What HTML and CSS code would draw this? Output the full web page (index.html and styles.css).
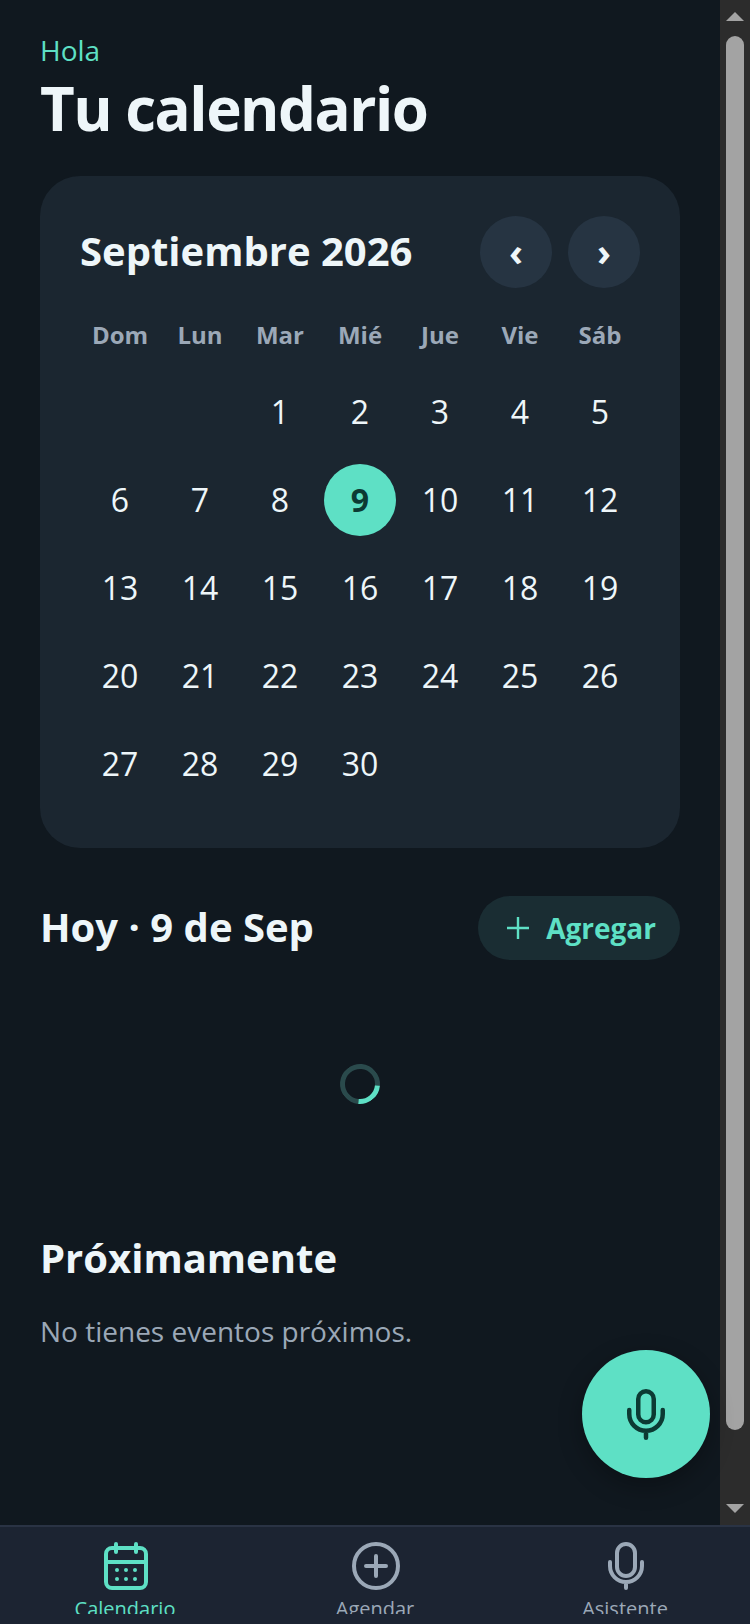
FILE: index.html
```html
<!DOCTYPE html>
<html lang="es">
 <head>
  <meta charset="UTF-8">
  <title>Tu calendario</title>
  <meta name="viewport" content="width=device-width, initial-scale=1.0">
  <link rel="stylesheet" href="styles.css">
 </head>
 <body>
  <div class="screen">
   <main class="content">
    <p class="hello">Hola</p>
    <h1 class="page-title">Tu calendario</h1>

    <section class="card">
     <div class="card-head">
      <h2 class="month">Septiembre 2026</h2>
      <div class="month-nav">
       <button class="round-btn">‹</button>
       <button class="round-btn">›</button>
      </div>
     </div>
     <div class="weekdays">
      <span>Dom</span><span>Lun</span><span>Mar</span><span>Mié</span><span>Jue</span><span>Vie</span><span>Sáb</span>
     </div>
     <div class="days">
      <span></span><span></span>
      <span>1</span><span>2</span><span>3</span><span>4</span><span>5</span>
      <span>6</span><span>7</span><span>8</span><span class="today">9</span><span>10</span><span>11</span><span>12</span>
      <span>13</span><span>14</span><span>15</span><span>16</span><span>17</span><span>18</span><span>19</span>
      <span>20</span><span>21</span><span>22</span><span>23</span><span>24</span><span>25</span><span>26</span>
      <span>27</span><span>28</span><span>29</span><span>30</span>
     </div>
    </section>

    <div class="today-head">
     <h2 class="section-title today-title">Hoy · 9 de Sep</h2>
     <button class="add-btn">
      <svg width="24" height="24" viewBox="0 0 24 24"><path d="M12 1 V23 M1 12 H23" fill="none" stroke="#5ee0c5" stroke-width="2.4"/></svg>
      Agregar
     </button>
    </div>

    <div class="loading"><div class="spinner"></div></div>

    <h2 class="section-title">Próximamente</h2>
    <p class="empty">No tienes eventos próximos.</p>

    <button class="fab">
     <svg width="38" height="51" viewBox="0 0 38 51"><g fill="none" stroke="#0c3a33" stroke-width="4.5" stroke-linecap="round"><rect x="11.25" y="2.25" width="15.5" height="31" rx="7.75"/><path d="M2.25 21 V25 A16.75 16.75 0 0 0 35.75 25 V21 M19 42 V48.75"/></g></svg>
    </button>
   </main>

   <div class="scrollbar">
    <div class="arrow-up"></div>
    <div class="thumb"></div>
    <div class="arrow-down"></div>
   </div>
  </div>

  <nav class="tabbar">
   <a class="tab active">
    <svg width="44" height="48" viewBox="0 0 44 48"><g fill="none" stroke="#5ee0c5" stroke-width="4" stroke-linecap="round"><rect x="2" y="6" width="40" height="40" rx="6"/><path d="M2 20 H42 M12 2 V10 M32 2 V10"/></g><g fill="#5ee0c5"><circle cx="13" cy="28" r="2"/><circle cx="22" cy="28" r="2"/><circle cx="31" cy="28" r="2"/><circle cx="13" cy="37" r="2"/><circle cx="22" cy="37" r="2"/><circle cx="31" cy="37" r="2"/></g></svg>
    <span>Calendario</span>
   </a>
   <a class="tab">
    <svg width="48" height="48" viewBox="0 0 48 48"><g fill="none" stroke="#9ba8b7" stroke-width="4" stroke-linecap="round"><circle cx="24" cy="24" r="22"/><path d="M24 14 V34 M14 24 H34"/></g></svg>
    <span>Agendar</span>
   </a>
   <a class="tab">
    <svg width="36" height="48" viewBox="0 0 36 48"><g fill="none" stroke="#9ba8b7" stroke-width="4" stroke-linecap="round"><rect x="9" y="2" width="18" height="32" rx="9"/><path d="M2 20 V24 A16 16 0 0 0 34 24 V20 M18 40 V46"/></g></svg>
    <span>Asistente</span>
   </a>
  </nav>
 </body>
</html>
```

FILE: styles.css
```css
* {
  box-sizing: border-box;
}
html, body {
  margin: 0;
  height: 100%;
}
body {
  font-family: "Open Sans", sans-serif;
  background: #10181f;
  color: #eef6f9;
  display: flex;
  flex-direction: column;
  height: 1624px;
  overflow: hidden;
}
.screen {
  display: flex;
  height: 1525px;
}
.content {
  position: relative;
  width: 720px;
  padding: 32px 40px 0;
}
.hello {
  margin: 0;
  font-size: 28px;
  line-height: 37px;
  color: #5ee0c5;
}
.page-title {
  margin: 0 0 29px;
  font-size: 60px;
  line-height: 78px;
  font-weight: 700;
  letter-spacing: -1.5px;
}
.card {
  background: #1b2630;
  border-radius: 40px;
  padding: 40px;
  height: 672px;
}
.card-head {
  display: flex;
  justify-content: space-between;
  align-items: center;
}
.month {
  margin: 0 0 4px;
  font-size: 40px;
  font-weight: 700;
}
.month-nav {
  display: flex;
  gap: 16px;
}
.round-btn {
  width: 72px;
  height: 72px;
  border: none;
  border-radius: 50%;
  background: #263442;
  color: #eef6f9;
  font-family: inherit;
  font-size: 38px;
  font-weight: 700;
  line-height: 70px;
  padding: 0 0 2px;
}
.weekdays, .days {
  display: grid;
  grid-template-columns: repeat(7, 80px);
  justify-items: center;
}
.weekdays {
  margin-top: 29px;
  height: 34px;
  align-items: center;
  font-size: 24px;
  font-weight: 700;
  color: #9ba8b7;
}
.days {
  margin-top: 25px;
  grid-auto-rows: 72px;
  row-gap: 16px;
  align-items: center;
  font-size: 32px;
}
.days span {
  width: 72px;
  height: 72px;
  padding-bottom: 2px;
  display: flex;
  align-items: center;
  justify-content: center;
}
.days .today {
  background: #5ee0c5;
  border-radius: 50%;
  color: #0c3a33;
  font-weight: 700;
}
.today-head {
  display: flex;
  justify-content: space-between;
  align-items: center;
  margin-top: 48px;
}
.section-title {
  margin: 0;
  font-size: 40px;
  line-height: 56px;
  font-weight: 700;
}
.today-title {
  margin-bottom: 2px;
}
.add-btn {
  display: flex;
  align-items: center;
  gap: 16px;
  height: 64px;
  padding: 0 24px 0 28px;
  border: none;
  border-radius: 32px;
  background: #1a2d33;
  color: #5ee0c5;
  font-family: inherit;
  font-size: 28px;
  font-weight: 700;
}
.loading {
  display: flex;
  justify-content: center;
  padding-top: 104px;
  height: 270px;
}
.spinner {
  width: 40px;
  height: 40px;
  border-radius: 50%;
  border: 5px solid #2a4a4c;
  border-right-color: #5ee0c5;
  transform: rotate(50deg);
}
.empty {
  margin: 25px 0 0;
  font-size: 28px;
  line-height: 40px;
  color: #9ba8b7;
}
.fab {
  position: absolute;
  left: 582px;
  top: 1350px;
  width: 128px;
  height: 128px;
  border: none;
  border-radius: 50%;
  background: #5ee0c5;
  box-shadow: 0 8px 24px rgba(0,0,0,0.3);
  display: flex;
  align-items: center;
  justify-content: center;
  padding: 0;
}
.scrollbar {
  width: 30px;
  background: #2c2c2c;
  display: flex;
  flex-direction: column;
  align-items: center;
  padding: 12px 0 12px;
}
.arrow-up, .arrow-down {
  width: 0;
  height: 0;
  border-left: 9px solid transparent;
  border-right: 9px solid transparent;
}
.arrow-up {
  border-bottom: 9px solid #a3a3a3;
}
.arrow-down {
  border-top: 9px solid #a3a3a3;
}
.thumb {
  width: 18px;
  height: 1394px;
  margin: 15px 0 auto;
  border-radius: 9px;
  background: #a3a3a3;
}
.tabbar {
  flex: 1;
  display: grid;
  grid-template-columns: repeat(3, 250px);
  background: #1c2432;
  border-top: 2px solid #2a3344;
  padding-top: 15px;
}
.tab {
  display: flex;
  flex-direction: column;
  align-items: center;
  gap: 5px;
  height: 72px;
  overflow: hidden;
  color: #9ba8b7;
  font-size: 20px;
  line-height: 28px;
}
.tab svg {
  flex: none;
  margin-left: 2px;
}
.tab.active {
  color: #5ee0c5;
}
```
